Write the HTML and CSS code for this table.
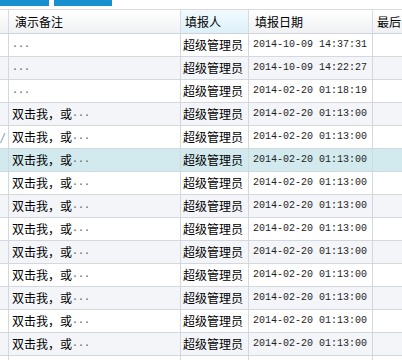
FILE: index.html
```html
<!DOCTYPE html>
<html>
<head>
<meta charset="utf-8">
<link rel="stylesheet" href="styles.css">
</head>
<body>
<div class="toolbar">
  <div class="btn btn-a"></div>
  <div class="btn btn-b"></div>
</div>
<div class="grid">
  <div class="row head">
    <div class="c c0"></div>
    <div class="c c1">演示备注</div>
    <div class="c c2 sorted">填报人</div>
    <div class="c c3">填报日期</div>
    <div class="c c4">最后</div>
  </div>
  <div class="row"><div class="c c0"></div><div class="c c1"><span class="m">...</span></div><div class="c c2">超级管理员</div><div class="c c3 m">2014-10-09 14:37:31</div><div class="c c4"></div></div>
  <div class="row alt"><div class="c c0"></div><div class="c c1"><span class="m">...</span></div><div class="c c2">超级管理员</div><div class="c c3 m">2014-10-09 14:22:27</div><div class="c c4"></div></div>
  <div class="row"><div class="c c0"></div><div class="c c1"><span class="m">...</span></div><div class="c c2">超级管理员</div><div class="c c3 m">2014-02-20 01:18:19</div><div class="c c4"></div></div>
  <div class="row alt"><div class="c c0"></div><div class="c c1">双击我，或<span class="m">...</span></div><div class="c c2">超级管理员</div><div class="c c3 m">2014-02-20 01:13:00</div><div class="c c4"></div></div>
  <div class="row"><div class="c c0"><svg class="chk" width="8" height="22" viewBox="0 0 8 22"><path d="M0.5 17 L5 7" stroke="#9fb3c8" stroke-width="1.3" fill="none"/></svg></div><div class="c c1">双击我，或<span class="m">...</span></div><div class="c c2">超级管理员</div><div class="c c3 m">2014-02-20 01:13:00</div><div class="c c4"></div></div>
  <div class="row sel"><div class="c c0"></div><div class="c c1">双击我，或<span class="m">...</span></div><div class="c c2">超级管理员</div><div class="c c3 m">2014-02-20 01:13:00</div><div class="c c4"></div></div>
  <div class="row"><div class="c c0"></div><div class="c c1">双击我，或<span class="m">...</span></div><div class="c c2">超级管理员</div><div class="c c3 m">2014-02-20 01:13:00</div><div class="c c4"></div></div>
  <div class="row alt"><div class="c c0"></div><div class="c c1">双击我，或<span class="m">...</span></div><div class="c c2">超级管理员</div><div class="c c3 m">2014-02-20 01:13:00</div><div class="c c4"></div></div>
  <div class="row"><div class="c c0"></div><div class="c c1">双击我，或<span class="m">...</span></div><div class="c c2">超级管理员</div><div class="c c3 m">2014-02-20 01:13:00</div><div class="c c4"></div></div>
  <div class="row alt"><div class="c c0"></div><div class="c c1">双击我，或<span class="m">...</span></div><div class="c c2">超级管理员</div><div class="c c3 m">2014-02-20 01:13:00</div><div class="c c4"></div></div>
  <div class="row"><div class="c c0"></div><div class="c c1">双击我，或<span class="m">...</span></div><div class="c c2">超级管理员</div><div class="c c3 m">2014-02-20 01:13:00</div><div class="c c4"></div></div>
  <div class="row alt"><div class="c c0"></div><div class="c c1">双击我，或<span class="m">...</span></div><div class="c c2">超级管理员</div><div class="c c3 m">2014-02-20 01:13:00</div><div class="c c4"></div></div>
  <div class="row"><div class="c c0"></div><div class="c c1">双击我，或<span class="m">...</span></div><div class="c c2">超级管理员</div><div class="c c3 m">2014-02-20 01:13:00</div><div class="c c4"></div></div>
  <div class="row alt"><div class="c c0"></div><div class="c c1">双击我，或<span class="m">...</span></div><div class="c c2">超级管理员</div><div class="c c3 m">2014-02-20 01:13:00</div><div class="c c4"></div></div>
  <div class="row tail"><div class="c c0"></div><div class="c c1"></div><div class="c c2"></div><div class="c c3"></div><div class="c c4"></div></div>
</div>
</body>
</html>
```

FILE: styles.css
```css
html, body {
  margin: 0;
  padding: 0;
  background: #ffffff;
  overflow: hidden;
}
body {
  font-family: "Noto Sans CJK SC", "Liberation Sans", sans-serif;
  font-size: 12px;
  color: #000;
}
.toolbar {
  display: flex;
  gap: 5px;
  height: 6px;
  margin-bottom: 3px;
}
.btn {
  height: 6px;
  background: #1790cf;
}
.btn-a { width: 49px; }
.btn-b { width: 58px; }
.grid {
  border-top: 1px solid #dadada;
}
.row {
  display: grid;
  grid-template-columns: 9px 172px 68px 124px 1fr;
  height: 23px;
  box-sizing: border-box;
  border-bottom: 1px solid #d3d8de;
  background: #ffffff;
}
.row.alt { background: #f3f5f8; }
.row.sel { background: #d2eaee; }
.row.tail { height: 4px; border-bottom: none; }
.row.head {
  height: 24px;
  background: linear-gradient(#ffffff, #eff1f3);
  border-bottom: 1px solid #d0d5db;
}
.c {
  box-sizing: border-box;
  border-right: 1px solid #d3d8de;
  padding: 0 4px;
  display: flex;
  align-items: center;
  white-space: nowrap;
  overflow: hidden;
  line-height: 22px;
}
.c0 { padding: 0; position: relative; }
.c4 { border-right: none; }
.c1 { padding-left: 3px; }
.c2 { padding-left: 2px; }
.head .c1 { padding-left: 6px; }
.head .c2 { padding-left: 4px; }
.head .c3 { padding-left: 6px; }
.head .c4 { padding-left: 4px; }
.head .c { border-right-color: #d6dbe0; }
.sorted {
  background: linear-gradient(#f2fafe, #dcf0fa);
}
.m {
  font-family: "Liberation Mono", "DejaVu Sans Mono", monospace;
  font-size: 10px;
  color: #1e1e1e;
}
.c1 .m { color: #555; }
.chk { display: block; }
```
